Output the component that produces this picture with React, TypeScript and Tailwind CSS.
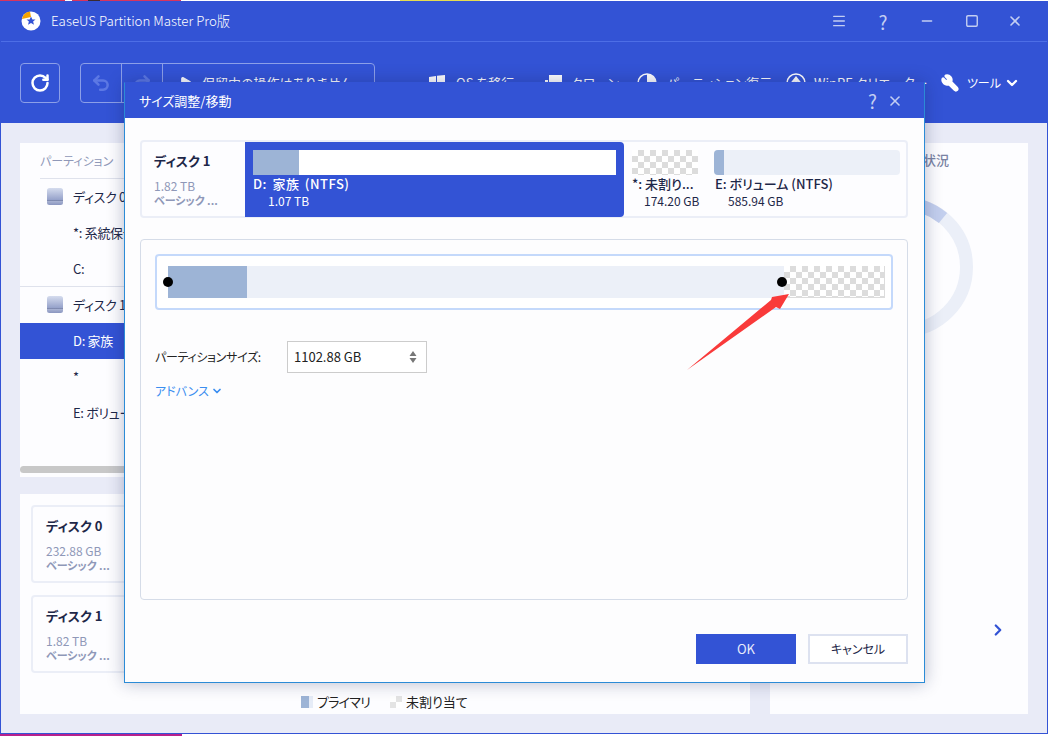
import { ChevronDown, ChevronRight, Menu, Minus, RotateCw, Square, Undo2, Redo2, X, Play, Wrench } from "lucide-react";

const checker =
  "bg-[conic-gradient(#dcdcdc_25%,#ffffff_0_50%,#dcdcdc_0_75%,#ffffff_0)] bg-[length:12px_12px]";

function DiskIcon() {
  return (
    <svg width="16" height="18" viewBox="0 0 16 18" className="shrink-0">
      <defs>
        <linearGradient id="disk" x1="0" y1="0" x2="0" y2="1">
          <stop offset="0" stopColor="#d5dcee" />
          <stop offset="0.68" stopColor="#97a3cb" />
          <stop offset="0.7" stopColor="#5f6b96" />
          <stop offset="0.78" stopColor="#a8b2d2" />
          <stop offset="1" stopColor="#8a96c0" />
        </linearGradient>
      </defs>
      <rect width="16" height="17" rx="2.5" fill="url(#disk)" />
    </svg>
  );
}

function TreeRow({ label, disk, selected }: { label: string; disk?: boolean; selected?: boolean }) {
  return (
    <div
      className={`flex h-9 items-center text-[13px] tracking-[-0.3px] whitespace-nowrap ${
        selected ? "bg-[#3353d5] text-white" : "text-[#1d2748]"
      }`}
    >
      <div className="flex w-[53px] justify-end pr-[10px]">{disk && <DiskIcon />}</div>
      {label}
    </div>
  );
}

function ToolItem({ icon, label, className }: { icon: React.ReactNode; label: string; className: string }) {
  return (
    <div className={`flex shrink-0 items-center whitespace-nowrap text-[13px] text-white ${className}`}>
      {icon}
      {label}
    </div>
  );
}

function DiskCard({ name, size }: { name: string; size: string }) {
  return (
    <div className="h-[78px] w-[300px] rounded border-2 border-[#ebeef7] pl-[13px] pt-[9px]">
      <div className="text-[13px] leading-[20px] font-bold text-[#1d2748]">{name}</div>
      <div className="mt-[8px] text-[12px] leading-[14px] text-[#8f98b8]">{size}</div>
      <div className="text-[11px] leading-[14px] font-bold text-[#8f98b8]">ベーシック ...</div>
    </div>
  );
}

function PartLabel({ name, size, className, sizeClass }: { name: string; size: string; className: string; sizeClass: string }) {
  return (
    <div className={`whitespace-nowrap text-[13px] font-medium ${className}`}>
      <div className="leading-[18px]">{name}</div>
      <div className={`text-[12px] font-normal leading-[15px] tracking-normal [word-spacing:0] ${sizeClass}`}>{size}</div>
    </div>
  );
}

export default function App() {
  return (
    <div className="relative h-[736px] w-[1048px] overflow-hidden bg-white font-['Noto_Sans_CJK_JP',sans-serif] [font-feature-settings:'palt']">
      {/* 後ろのウィンドウの切れ端 */}
      <div className="flex h-px">
        <div className="w-[65px] bg-[#d8345f]" />
        <div className="w-[7px] bg-white" />
        <div className="w-[16px] bg-[#d8345f]" />
        <div className="w-[12px] bg-[#3a2a30]" />
        <div className="w-[81px] bg-[#d8345f]" />
        <div className="w-[219px] bg-white" />
        <div className="w-[80px] bg-[#e6dc50]" />
      </div>

      <div className="flex h-[733px] flex-col border-x border-b border-[#3353d5] bg-[#e9ebf7]">
        {/* タイトルバー */}
        <div className="flex h-10 shrink-0 items-center bg-[#3353d5] pl-5 text-white">
          <svg width="20" height="20" viewBox="0 0 20 20" className="shrink-0">
            <circle cx="10" cy="10" r="9.5" fill="#fff" />
            <path d="M1 8 A9.5 9.5 0 0 1 9 .5 L10 6 Z" fill="#f5a300" />
            <path d="M10 5.5l1.4 3h3.1l-2.4 2.1.9 3.2-3-1.8-3 1.8.9-3.2-2.4-2.1h3.1z" fill="#3353d5" />
          </svg>
          <span className="ml-[10px] text-[13.3px] font-light">EaseUS Partition Master Pro版</span>
          <div className="ml-auto flex items-center pr-[24px] text-[#c3cef2]">
            <Menu size={16} strokeWidth={2} />
            <span className="ml-[28px] w-4 text-center text-[19px] leading-none">?</span>
            <Minus size={16} strokeWidth={2} className="ml-[28px]" />
            <Square size={14} strokeWidth={2.4} className="ml-[30px]" />
            <X size={16} strokeWidth={2.4} className="ml-[28px]" />
          </div>
        </div>
        <div className="h-px shrink-0 bg-[#4d6ee6]" />

        {/* ツールバー */}
        <div className="flex h-[81px] shrink-0 items-center bg-[#3353d5] pl-[19px]">
          <div className="flex h-10 w-10 shrink-0 items-center justify-center rounded-sm border border-[#8c9fe8]">
            <RotateCw size={20} strokeWidth={3} className="text-white" />
          </div>
          <div className="ml-5 flex h-10 w-[295px] shrink-0 items-center rounded-sm border border-[#8c9fe8] text-[13px] text-white">
            <div className="flex h-full w-[41px] items-center justify-center border-r border-[#8c9fe8]">
              <Undo2 size={20} strokeWidth={3} className="text-[#5c78e4]" />
            </div>
            <div className="flex h-full w-[41px] items-center justify-center border-r border-[#8c9fe8]">
              <Redo2 size={20} strokeWidth={3} className="text-[#5c78e4]" />
            </div>
            <Play size={13} fill="#fff" className="ml-4" />
            <span className="ml-[10px] whitespace-nowrap">保留中の操作はありません</span>
          </div>
          <ToolItem
            className="ml-[54px] w-[115px] gap-[11px]"
            label="OS を移行"
            icon={
              <svg width="16" height="16" viewBox="0 0 16 16" fill="#fff" className="shrink-0">
                <path d="M0 2l7-1v6.500H0zM8 .8L16 0v7.500H8zM0 8.500h7V15l-7-1zM8 8.500h8V16l-8-1z" />
              </svg>
            }
          />
          <ToolItem
            className="w-[93px] gap-[7px]"
            label="クローン"
            icon={
              <svg width="20" height="18" viewBox="0 0 20 18" fill="#fff" className="shrink-0">
                <path d="M5 1h13v10H5z" />
                <path d="M1 6h3v9h10v2H1z" />
              </svg>
            }
          />
          <ToolItem
            className="w-[149px] gap-[10px]"
            label="パーティション復元"
            icon={
              <svg width="20" height="20" viewBox="0 0 20 20" className="shrink-0">
                <circle cx="10" cy="10" r="9" fill="none" stroke="#fff" strokeWidth="1.500" />
                <path d="M10 1a9 9 0 0 1 9 9h-9z" fill="#fff" />
              </svg>
            }
          />
          <ToolItem
            className="gap-[8px]"
            label="WinPE クリエーター"
            icon={
              <svg width="20" height="20" viewBox="0 0 20 20" className="shrink-0">
                <circle cx="10" cy="10" r="9" fill="none" stroke="#fff" strokeWidth="1.500" />
                <path d="M10 5v10M6 10l4-5 4 5" fill="none" stroke="#fff" strokeWidth="2.500" />
              </svg>
            }
          />
          <div className="ml-auto flex shrink-0 items-center whitespace-nowrap pr-[27px] text-[12px] text-white">
            <Wrench size={18} strokeWidth={3} fill="#fff" className="-scale-x-100" />
            <span className="ml-[8px]">ツール</span>
            <ChevronDown size={16} strokeWidth={3.500} className="ml-[3px]" />
          </div>
        </div>

        {/* 本体 */}
        <div className="flex min-h-0 flex-1 gap-5 px-[19px] pb-[19px] pt-5">
          <div className="flex w-[730px] flex-col gap-[17px]">
            <div className="h-[334px] bg-[#fdfdff]">
              <div className="flex h-9 items-center pl-5 text-[12px] text-[#8f98b8]">
                <div className="flex h-full w-full items-center border-b border-[#dfe2ec]">パーティション</div>
              </div>
              <TreeRow label="ディスク 0" disk />
              <TreeRow label="*: 系統保留" />
              <div className="h-9 border-b border-[#dfe2ec]">
                <TreeRow label="C:" />
              </div>
              <TreeRow label="ディスク 1" disk />
              <TreeRow label="D: 家族" selected />
              <TreeRow label="*" />
              <TreeRow label="E: ボリューム" />
              <div className="mt-[35px] h-[7px] w-[300px] rounded-full bg-[#c8c8c8]" />
            </div>
            <div className="relative flex flex-1 flex-col gap-3 bg-[#fdfdff] pl-[11px] pt-[11px]">
              <DiskCard name="ディスク 0" size="232.88 GB" />
              <DiskCard name="ディスク 1" size="1.82 TB" />
              <div className="mt-[7px] flex items-center whitespace-nowrap pl-[270px] text-[13px] text-[#222]">
                <div className="h-3 w-3 border-r-4 border-[#e6ecf7] bg-[#9db4d6]" />
                <span className="ml-[4px] w-[52px] tracking-[-0.8px]">プライマリ</span>
                <div className="ml-[21px] h-3 w-3 bg-[conic-gradient(#e4e4e4_25%,#ffffff_0_50%,#e4e4e4_0_75%,#ffffff_0)] bg-[length:12px_12px]" />
                <span className="ml-[4px]">未割り当て</span>
              </div>
            </div>
          </div>

          <div className="flex w-[258px] flex-col bg-[#fdfdff]">
            <div className="w-[179px] pt-[7px] text-right text-[13px] font-medium leading-5 text-[#7a83a3]">ディスク状況</div>
            <svg width="150" height="150" viewBox="0 0 150 150" className="ml-[58px] mt-[22px]">
              <circle cx="75" cy="75" r="63.500" fill="none" stroke="#ebeff8" strokeWidth="13" />
              <path d="M75 11.500 A63.500 63.500 0 0 1 115 26" fill="none" stroke="#c3cfee" strokeWidth="13" />
            </svg>
            <ChevronRight size={18} strokeWidth={3} className="ml-auto mr-[21px] mt-[279px] text-[#3353d5]" />
          </div>
        </div>
      </div>

      <div className="flex h-[2px]">
        <div className="w-[182px] bg-[#b8218c]" />
      </div>

      {/* ダイアログ */}
      <div className="absolute left-[124px] top-[82px] flex h-[601px] w-[801px] flex-col border border-[#2b8bd6] border-t-[#3353d5] bg-white shadow-[0_0_16px_rgba(20,30,80,0.3)]">
        <div className="flex h-[35px] items-center bg-[#3353d5] pl-[14px] pr-[21px] text-[13px] text-white">
          サイズ調整/移動
          <span className="ml-auto text-[19px] leading-none text-[#c3cef2]">?</span>
          <X size={16} strokeWidth={2.400} className="ml-[10px] text-[#c3cef2]" />
        </div>
        <div className="flex flex-1 flex-col bg-[#fdfdfe] px-[15px] pt-[22px]">
          {/* ディスクの帯 */}
          <div className="flex h-[78px] w-[768px] rounded border-2 border-[#ebeef7] bg-[#fdfdff]">
            <div className="w-[103px] pl-3 pt-[9px]">
              <div className="text-[13px] font-bold leading-[20px] text-[#1d2748]">ディスク 1</div>
              <div className="mt-[8px] text-[12px] leading-[14px] text-[#8f98b8]">1.82 TB</div>
              <div className="text-[11px] font-bold leading-[14px] text-[#8f98b8]">ベーシック ...</div>
            </div>
            <div className="flex h-[75px] w-[379px] flex-col rounded-r-sm bg-[#3353d5] px-2 pt-2 text-white">
              <div className="h-[25px] bg-white">
                <div className="h-full w-[46px] bg-[#9db4d6]" />
              </div>
              <PartLabel name="D: 家族 (NTFS)" size="1.07 TB" sizeClass="pl-[15px]" className="text-white tracking-[0.5px] [word-spacing:2px]" />
            </div>
            <div className="ml-2 flex w-[66px] flex-col pt-2">
              <div className={`h-[25px] ${checker}`} />
              <PartLabel name="*: 未割り..." size="174.20 GB" sizeClass="pl-3" className="text-[#1d2748]" />
            </div>
            <div className="ml-4 flex w-[186px] flex-col pt-2">
              <div className="h-[25px] rounded-sm bg-[#ecf0f8]">
                <div className="h-full w-[10px] rounded-l-sm bg-[#9db4d6]" />
              </div>
              <PartLabel name="E: ボリューム (NTFS)" size="585.94 GB" sizeClass="pl-[13px]" className="pl-px text-[#1d2748]" />
            </div>
          </div>

          {/* サイズ変更 */}
          <div className="mt-[21px] h-[361px] w-[768px] rounded border border-[#d5dce8] bg-[#fdfdfe] px-[14px] pt-[14px]">
            <div className="relative flex h-[56px] w-[738px] items-center rounded border-2 border-[#c4d9fb] bg-white pl-[11px]">
              <div className="h-8 w-[79px] bg-[#9db4d6]" />
              <div className="h-8 w-[537px] bg-[#ecf0f8]" />
              <div className={`h-8 w-[101px] border-b border-r border-[#dcdcdc] ${checker}`} />
              <div className="absolute left-[6px] top-[21px] h-[10px] w-[10px] rounded-full bg-black" />
              <div className="absolute left-[620px] top-[21px] h-[10px] w-[10px] rounded-full bg-black" />
            </div>
            <div className="mt-[31px] flex items-center">
              <span className="w-[132px] whitespace-nowrap text-[12px] tracking-[-0.3px] text-[#222]">パーティションサイズ:</span>
              <div className="flex h-8 w-[140px] items-center border border-[#ccc] bg-white pl-[6px] pr-[9px] text-[13px] text-[#222]">
                1102.88 GB
                <svg width="8" height="14" viewBox="0 0 8 14" fill="#777" className="ml-auto">
                  <path d="M4 1l3.500 5h-7zM4 13L.5 8h7z" />
                </svg>
              </div>
            </div>
            <div className="mt-[9px] flex items-center gap-[2px] text-[12px] text-[#3b8ef0]">
              アドバンス
              <ChevronDown size={12} strokeWidth={3.500} />
            </div>
          </div>

          <div className="mt-[34px] flex justify-end gap-3 pr-px">
            <div className="flex h-[30px] w-[100px] items-center justify-center bg-[#3353d5] text-[13px] text-[#e8ecfb]">
              OK
            </div>
            <div className="flex h-[30px] w-[100px] items-center justify-center border-2 border-[#dde2f0] bg-white text-[12px] text-[#1d2748]">
              キャンセル
            </div>
          </div>
        </div>
      </div>

      {/* 赤い矢印 */}
      <svg width="115" height="90" viewBox="680 288 115 90" className="absolute left-[680px] top-[288px]">
        <path d="M687 370L771 300 772 297 789 294 780 309 776 307z" fill="#f93a3a" />
      </svg>
    </div>
  );
}
